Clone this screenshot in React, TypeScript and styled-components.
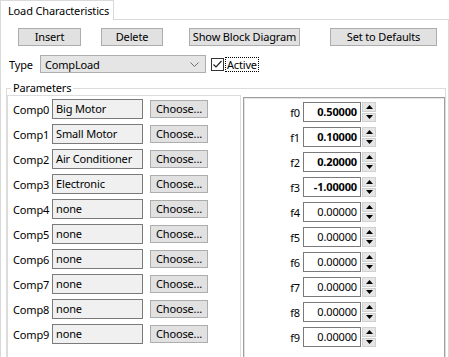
import React from "react";
import styled, { createGlobalStyle, css } from "styled-components";

const Global = createGlobalStyle`
  html, body { margin: 0; padding: 0; background: #ffffff; }
  body { font-family: "Noto Sans", "Liberation Sans", sans-serif; font-size: 11px; letter-spacing: -0.15px; color: #000; }
`;

const Window = styled.div`
  width: 449px;
  height: 357px;
  overflow: hidden;
  background: #ffffff;
  position: relative;
`;

const TabStrip = styled.div`
  display: flex;
  height: 19px;
`;

const Tab = styled.div`
  width: 114px;
  height: 20px;
  box-sizing: border-box;
  border: 1px solid #d9d9d9;
  border-bottom: none;
  background: #ffffff;
  padding: 3px 0 0 7px;
  position: relative;
  z-index: 1;
  line-height: 14px;
  white-space: nowrap;
`;

const TabPanel = styled.div`
  height: 338px;
  box-sizing: border-box;
  border: 1px solid #d9d9d9;
  border-bottom: none;
  display: flex;
  flex-direction: column;
`;

const ButtonRow = styled.div`
  display: flex;
  align-items: center;
  height: 18px;
  margin: 8px 0 0 17px;
`;

const PushButton = styled.button<{ $w: number; $ml?: number }>`
  width: ${(p) => p.$w}px;
  height: 18px;
  margin-left: ${(p) => p.$ml ?? 0}px;
  box-sizing: border-box;
  border: 1px solid #adadad;
  background: #e1e1e1;
  font: inherit;
  letter-spacing: inherit;
  color: #000;
  padding: 0;
  line-height: 14px;
  white-space: nowrap;
`;

const TypeRow = styled.div`
  display: flex;
  align-items: center;
  height: 18px;
  margin: 9px 0 0 8px;
`;

const Label = styled.span<{ $w?: number }>`
  ${(p) => p.$w && css`width: ${p.$w}px;`}
  white-space: nowrap;
`;

const Combo = styled.div`
  width: 166px;
  height: 18px;
  margin-left: 7px;
  box-sizing: border-box;
  border: 1px solid #adadad;
  background: #e5e5e5;
  display: flex;
  align-items: center;
  justify-content: space-between;
  padding: 0 6px 0 4px;
`;

const Check = styled.span`
  width: 13px;
  height: 13px;
  margin-left: 5px;
  box-sizing: border-box;
  border: 1px solid #333;
  background: #fff;
  display: inline-flex;
  align-items: center;
  justify-content: center;
`;

const FocusText = styled.span`
  margin-left: 2px;
  outline: 1px dotted #000;
  padding: 0 1px;
  line-height: 13px;
`;

const GroupBox = styled.div`
  position: relative;
  margin: 15px 2px 0 5px;
  flex: 1;
  border: 1px solid #dcdcdc;
  border-bottom: none;
  display: flex;
  gap: 2px;
  padding: 6px 0 0 0;
`;

const Legend = styled.span`
  position: absolute;
  top: -8px;
  left: 4px;
  background: #fff;
  padding: 0 2px;
  line-height: 14px;
`;

const LeftPane = styled.div`
  width: 234px;
  box-sizing: border-box;
  border: 1px solid #dcdcdc;
  border-bottom: none;
  padding: 3px 0 0 5px;
  display: flex;
  flex-direction: column;
  gap: 5px;
`;

const RightPane = styled.div`
  flex: 1;
  margin-top: 2px;
  box-sizing: border-box;
  border: 1px solid #a0a0a0;
  border-bottom: none;
  box-shadow: inset 1px 1px 0 #e3e3e3;
  padding: 4px 0 0 39px;
  display: flex;
  flex-direction: column;
  gap: 5px;
`;

const CompRow = styled.div`
  display: flex;
  align-items: center;
  height: 20px;
`;

const ReadBox = styled.div`
  width: 91px;
  height: 20px;
  box-sizing: border-box;
  border: 1px solid #7a7a7a;
  background: #f0f0f0;
  padding: 2px 0 0 3px;
  line-height: 14px;
  white-space: nowrap;
`;

const FRow = styled.div`
  display: flex;
  align-items: center;
  height: 20px;
`;

const FLabel = styled.span`
  width: 17px;
  text-align: right;
  margin-right: 3px;
`;

const NumBox = styled.div<{ $bold: boolean }>`
  width: 58px;
  height: 20px;
  box-sizing: border-box;
  border: 1px solid #7a7a7a;
  background: #fff;
  text-align: right;
  padding: 2px 3px 0 0;
  line-height: 14px;
  font-weight: ${(p) => (p.$bold ? 700 : 400)};
`;

const Spinner = styled.div`
  width: 14px;
  height: 20px;
  margin-left: 1px;
  display: flex;
  flex-direction: column;
  gap: 1px;
`;

const SpinHalf = styled.div`
  flex: 1;
  box-sizing: border-box;
  background: #e6e6e6;
  border: 1px solid #d0d0d0;
  display: flex;
  align-items: center;
  justify-content: center;
`;

const Arrow = ({ up }: { up: boolean }) => (
  <svg width="7" height="4" viewBox="0 0 7 4">
    {up ? <path d="M0 4 L3.5 0 L7 4 Z" fill="#000" /> : <path d="M0 0 L3.5 4 L7 0 Z" fill="#000" />}
  </svg>
);

const comps = [
  "Big Motor",
  "Small Motor",
  "Air Conditioner",
  "Electronic",
  "none",
  "none",
  "none",
  "none",
  "none",
  "none",
];
const fvals = ["0.50000", "0.10000", "0.20000", "-1.00000", "0.00000", "0.00000", "0.00000", "0.00000", "0.00000", "0.00000"];

export default function App() {
  return (
    <Window>
      <Global />
      <TabStrip>
        <Tab>Load Characteristics</Tab>
      </TabStrip>
      <TabPanel>
        <ButtonRow>
          <PushButton $w={63}>Insert</PushButton>
          <PushButton $w={62} $ml={20}>Delete</PushButton>
          <PushButton $w={111} $ml={26}>Show Block Diagram</PushButton>
          <PushButton $w={107} $ml={30}>Set to Defaults</PushButton>
        </ButtonRow>
        <TypeRow>
          <Label>Type</Label>
          <Combo>
            <span>CompLoad</span>
            <svg width="9" height="5" viewBox="0 0 9 5">
              <path d="M0.5 0.5 L4.5 4.5 L8.5 0.5" fill="none" stroke="#707070" strokeWidth="1" />
            </svg>
          </Combo>
          <Check>
            <svg width="11" height="11" viewBox="0 0 11 11">
              <path d="M1.5 5.5 L4 8 L9.5 2" fill="none" stroke="#222" strokeWidth="1.2" />
            </svg>
          </Check>
          <FocusText>Active</FocusText>
        </TypeRow>
        <GroupBox>
          <Legend>Parameters</Legend>
          <LeftPane>
            {comps.map((c, i) => (
              <CompRow key={i}>
                <Label $w={39}>Comp{i}</Label>
                <ReadBox>{c}</ReadBox>
                <PushButton $w={58} $ml={7}>Choose...</PushButton>
              </CompRow>
            ))}
          </LeftPane>
          <RightPane>
            {fvals.map((v, i) => (
              <FRow key={i}>
                <FLabel>f{i}</FLabel>
                <NumBox $bold={i < 4}>{v}</NumBox>
                <Spinner>
                  <SpinHalf>
                    <Arrow up />
                  </SpinHalf>
                  <SpinHalf>
                    <Arrow up={false} />
                  </SpinHalf>
                </Spinner>
              </FRow>
            ))}
          </RightPane>
        </GroupBox>
      </TabPanel>
    </Window>
  );
}
